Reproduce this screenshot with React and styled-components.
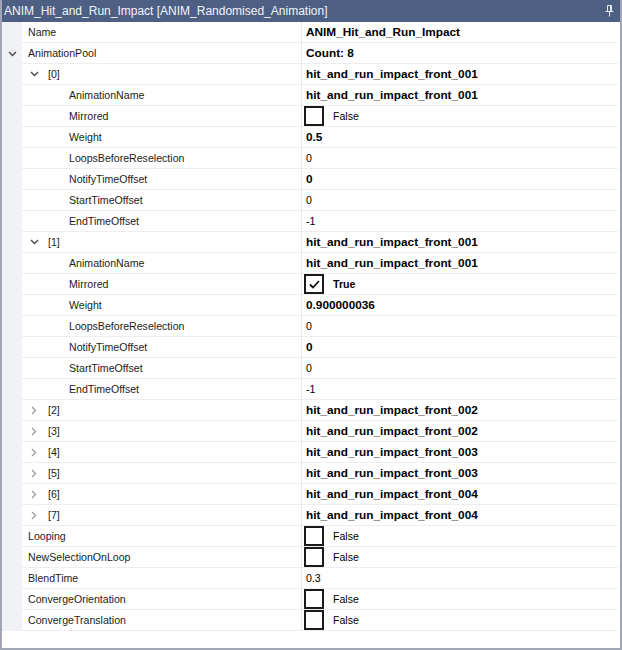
import React from "react";
import styled, { createGlobalStyle } from "styled-components";

const GlobalStyle = createGlobalStyle`
  html, body {
    margin: 0;
    padding: 0;
    background: #ffffff;
  }
`;

const Frame = styled.div`
  width: 622px;
  height: 650px;
  box-sizing: border-box;
  border: 2px solid #a2a5b3;
  border-top: none;
  display: flex;
  flex-direction: column;
  background: #ffffff;
  font-family: "Liberation Sans", Arial, sans-serif;
  overflow: hidden;
`;

const TitleBar = styled.div`
  height: 22px;
  flex: none;
  background: #4d6084;
  color: #f2f4f8;
  font-size: 12px;
  display: flex;
  align-items: center;
  justify-content: space-between;
  padding: 0 8px 0 4px;
  margin: 0 -2px;
`;

const Grid = styled.div`
  display: flex;
  flex-direction: column;
  padding-right: 2px;
`;

const Row = styled.div`
  display: flex;
  height: 21px;
`;

const Gutter = styled.div`
  width: 20px;
  flex: none;
  background: #f1f2f6;
  display: flex;
  align-items: center;
  justify-content: center;
`;

const NameCell = styled.div`
  width: 280px;
  flex: none;
  box-sizing: border-box;
  border-bottom: 1px solid #eeeeee;
  border-right: 1px solid #e9e9e9;
  display: flex;
  align-items: center;
  padding-left: ${({ $indent }) => $indent}px;
  font-size: 10.6px;
  color: #1c1c1c;
  white-space: nowrap;
`;

const ValueCell = styled.div`
  flex: 1;
  box-sizing: border-box;
  border-bottom: 1px solid #eeeeee;
  display: flex;
  align-items: center;
  padding-left: 4px;
  font-size: ${({ $bold }) => ($bold ? "11.8px" : "10.6px")};
  font-weight: ${({ $bold }) => ($bold ? 700 : 400)};
  color: #000000;
  white-space: nowrap;
`;

const Toggle = styled.span`
  width: 14px;
  height: 14px;
  display: inline-flex;
  align-items: center;
  justify-content: center;
  margin-right: ${({ $gap }) => $gap}px;
`;

const CheckBox = styled.span`
  width: 16px;
  height: 16px;
  border: 2px solid #1a1a1a;
  background: #ffffff;
  display: inline-flex;
  align-items: center;
  justify-content: center;
  margin: 0 9px 0 -2px;
`;

const CheckLabel = styled.span`
  font-weight: ${({ $bold }) => ($bold ? 700 : 400)};
`;

const Chevron = ({ open }) =>
  open ? (
    <svg width="9" height="6" viewBox="0 0 9 6">
      <path d="M1 1 L4.5 4.5 L8 1" fill="none" stroke="#4a4a4a" strokeWidth="1.4" />
    </svg>
  ) : (
    <svg width="6" height="9" viewBox="0 0 6 9">
      <path d="M1 1 L4.5 4.5 L1 8" fill="none" stroke="#9a9a9a" strokeWidth="1.3" />
    </svg>
  );

const Pin = () => (
  <svg width="9" height="12" viewBox="0 0 9 12">
    <path
      d="M2.5 0.5 H6.5 V6.5 H2.5 Z M0.5 6.5 H8.5 M4.5 6.5 V11.5 M5.5 1 V6"
      fill="none"
      stroke="#e6e9f0"
      strokeWidth="1"
    />
  </svg>
);

const element = (index, file, mirrored, weight) => [
  { name: `[${index}]`, depth: 1, open: true, value: file, bold: true },
  { name: "AnimationName", depth: 2, value: file, bold: true },
  { name: "Mirrored", depth: 2, check: mirrored },
  { name: "Weight", depth: 2, value: weight, bold: true },
  { name: "LoopsBeforeReselection", depth: 2, value: "0" },
  { name: "NotifyTimeOffset", depth: 2, value: "0", bold: true },
  { name: "StartTimeOffset", depth: 2, value: "0" },
  { name: "EndTimeOffset", depth: 2, value: "-1" },
];

const rows = [
  { name: "Name", depth: 0, value: "ANIM_Hit_and_Run_Impact", bold: true },
  { name: "AnimationPool", depth: 0, open: true, value: "Count: 8", bold: true },
  ...element(0, "hit_and_run_impact_front_001", false, "0.5"),
  ...element(1, "hit_and_run_impact_front_001", true, "0.900000036"),
  { name: "[2]", depth: 1, open: false, value: "hit_and_run_impact_front_002", bold: true },
  { name: "[3]", depth: 1, open: false, value: "hit_and_run_impact_front_002", bold: true },
  { name: "[4]", depth: 1, open: false, value: "hit_and_run_impact_front_003", bold: true },
  { name: "[5]", depth: 1, open: false, value: "hit_and_run_impact_front_003", bold: true },
  { name: "[6]", depth: 1, open: false, value: "hit_and_run_impact_front_004", bold: true },
  { name: "[7]", depth: 1, open: false, value: "hit_and_run_impact_front_004", bold: true },
  { name: "Looping", depth: 0, check: false },
  { name: "NewSelectionOnLoop", depth: 0, check: false },
  { name: "BlendTime", depth: 0, value: "0.3" },
  { name: "ConvergeOrientation", depth: 0, check: false },
  { name: "ConvergeTranslation", depth: 0, check: false },
];

const indentFor = (row) => {
  if (row.depth === 0) return 6;
  if (row.depth === 1) return 5;
  return 47;
};

function PropertyRow({ row }) {
  const expandable = row.open !== undefined;
  return (
    <Row>
      <Gutter>{row.depth === 0 && expandable && <Chevron open={row.open} />}</Gutter>
      <NameCell $indent={indentFor(row)}>
        {row.depth === 1 && (
          <Toggle $gap={7}>
            <Chevron open={row.open} />
          </Toggle>
        )}
        {row.name}
      </NameCell>
      {row.check !== undefined ? (
        <ValueCell>
          <CheckBox>
            {row.check && (
              <svg width="11" height="9" viewBox="0 0 11 9">
                <path d="M1 4.5 L4 7.5 L10 1" fill="none" stroke="#111" strokeWidth="1.8" />
              </svg>
            )}
          </CheckBox>
          <CheckLabel $bold={row.check}>{row.check ? "True" : "False"}</CheckLabel>
        </ValueCell>
      ) : (
        <ValueCell $bold={row.bold}>{row.value}</ValueCell>
      )}
    </Row>
  );
}

export default function App() {
  return (
    <>
      <GlobalStyle />
      <Frame>
        <TitleBar>
          <span>ANIM_Hit_and_Run_Impact [ANIM_Randomised_Animation]</span>
          <Pin />
        </TitleBar>
        <Grid>
          {rows.map((row, i) => (
            <PropertyRow key={i} row={row} />
          ))}
        </Grid>
      </Frame>
    </>
  );
}
